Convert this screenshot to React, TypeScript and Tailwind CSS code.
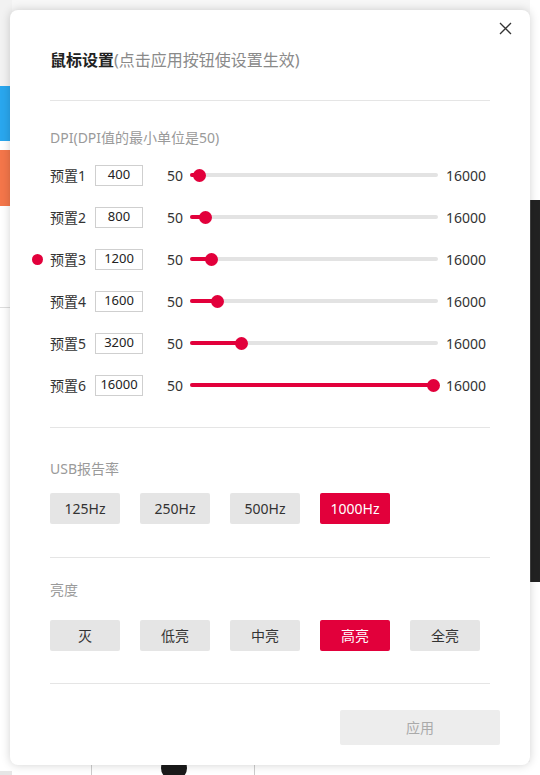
import * as React from "react";

const presets = [400, 800, 1200, 1600, 3200, 16000];
const rates = ["125Hz", "250Hz", "500Hz", "1000Hz"];
const levels = ["灭", "低亮", "中亮", "高亮", "全亮"];

const DpiSlider: React.FC<{value: number}> = ({value}) => {
    const frac = (value - 50) / (16000 - 50);
    const center = 4 + frac * 239;
    return (
        <div className="relative w-[248px] h-[13px] flex items-center">
            <div className="w-full h-[4px] rounded-full bg-[#e3e3e3]" />
            <div className="absolute left-0 h-[4px] rounded-full bg-[#e2003b]" style={{width: center}} />
            <div className="absolute w-[13px] h-[13px] rounded-full bg-[#e2003b]" style={{left: center - 6.5}} />
        </div>
    );
};

const OptionGroup: React.FC<{items: string[]; selected: number; onPick: (i: number) => void}> = ({items, selected, onPick}) => (
    <div className="flex gap-[20px]">
        {items.map((label, i) => (
            <button
                key={label}
                onClick={() => onPick(i)}
                className={
                    selected === i
                        ? "w-[70px] h-[31px] rounded-[2px] bg-[#e2003b] text-white text-[14px]"
                        : "w-[70px] h-[31px] rounded-[2px] bg-[#e5e5e5] text-[#333] text-[14px]"
                }
            >
                {label}
            </button>
        ))}
    </div>
);

const App: React.FC = () => {
    const [active, setActive] = React.useState(2);
    const [rate, setRate] = React.useState(3);
    const [level, setLevel] = React.useState(3);

    return (
        <div
            className="relative w-[540px] h-[775px] overflow-hidden flex bg-[#f7f7f7]"
            style={{fontFamily: '"Noto Sans", "Noto Sans CJK SC", sans-serif'}}
        >
            {/* page behind the dialog */}
            <div className="w-[12px] flex flex-col">
                <div className="h-[86px] bg-[#f2f2f2]" />
                <div className="h-[55px] bg-[#2aa7ee]" />
                <div className="h-[9px] bg-white" />
                <div className="h-[56px] bg-[#f4764a]" />
                <div className="h-[102px] bg-white border-b border-[#dddddd]" />
                <div className="flex-1 bg-white" />
                <div className="h-[4px] w-[22px] bg-[#e6e6e6]" />
            </div>
            <div className="flex-1 flex flex-col">
                <div className="flex-1 bg-[#f7f7f7]" />
                <div className="h-[13px] bg-white flex">
                    <div className="w-[80px] border-r border-[#cccccc]" />
                    <div className="w-[69px]" />
                    <div className="w-[26px] h-[24px] -mt-[6px] rounded-full bg-[#1a1a1a]" />
                    <div className="w-[68px] border-r border-[#cccccc]" />
                </div>
            </div>
            <div className="w-[10px] flex flex-col">
                <div className="h-[200px] bg-white" />
                <div className="h-[382px] bg-[#222222] border-l border-[#444]" />
                <div className="flex-1 bg-white" />
            </div>

            {/* dialog */}
            <div className="absolute left-[10px] top-[10px] w-[520px] h-[755px] rounded-[8px] bg-white shadow-[0_0_10px_rgba(0,0,0,0.18)] pt-[38px] px-[40px]">
                <button className="absolute right-[10px] top-[3px] w-[30px] h-[30px] flex items-center justify-center text-[#333]">
                    <svg width="13" height="13" viewBox="0 0 13 13" fill="none" stroke="currentColor" strokeWidth="1.3">
                        <path d="M1 1L12 12M12 1L1 12" />
                    </svg>
                </button>

                <div className="h-[24px] flex items-center text-[16px] leading-[24px]">
                    <span className="font-bold text-[#222]">鼠标设置</span>
                    <span className="text-[#8a8a8a]">(点击应用按钮使设置生效)</span>
                </div>

                <div className="mt-[28px] h-px bg-[#e5e5e5]" />

                <div className="mt-[27px] text-[14px] leading-[20px] text-[#9a9a9a]">DPI(DPI值的最小单位是50)</div>

                <div className="mt-[6px] flex flex-col">
                    {presets.map((v, i) => (
                        <div key={v} className="h-[42px] flex items-center text-[14px] text-[#333] -ml-[18px]" onClick={() => setActive(i)}>
                            <div className="w-[18px]">
                                {active === i && <div className="w-[11px] h-[11px] rounded-full bg-[#e2003b]" />}
                            </div>
                            <span className="w-[45px]">预置{i + 1}</span>
                            <div className="w-[48px] h-[21px] border border-[#cfcfcf] flex items-center justify-center text-[13px] text-[#222]">
                                {v}
                            </div>
                            <span className="ml-[24px] w-[23px]">50</span>
                            <DpiSlider value={v} />
                            <span className="ml-[8px]">16000</span>
                        </div>
                    ))}
                </div>

                <div className="mt-[21px] h-px bg-[#e5e5e5]" />

                <div className="mt-[31px] text-[14px] leading-[20px] text-[#9a9a9a]">USB报告率</div>
                <div className="mt-[14px]">
                    <OptionGroup items={rates} selected={rate} onPick={setRate} />
                </div>

                <div className="mt-[33px] h-px bg-[#e5e5e5]" />

                <div className="mt-[22px] text-[14px] leading-[20px] text-[#9a9a9a]">亮度</div>
                <div className="mt-[20px]">
                    <OptionGroup items={levels} selected={level} onPick={setLevel} />
                </div>

                <div className="mt-[32px] h-px bg-[#e5e5e5]" />

                <div className="mt-[26px] flex justify-end -mr-[10px]">
                    <button className="w-[160px] h-[35px] rounded-[2px] bg-[#ededed] text-[#aaaaaa] text-[14px]">应用</button>
                </div>
            </div>
        </div>
    );
};

export default App;
